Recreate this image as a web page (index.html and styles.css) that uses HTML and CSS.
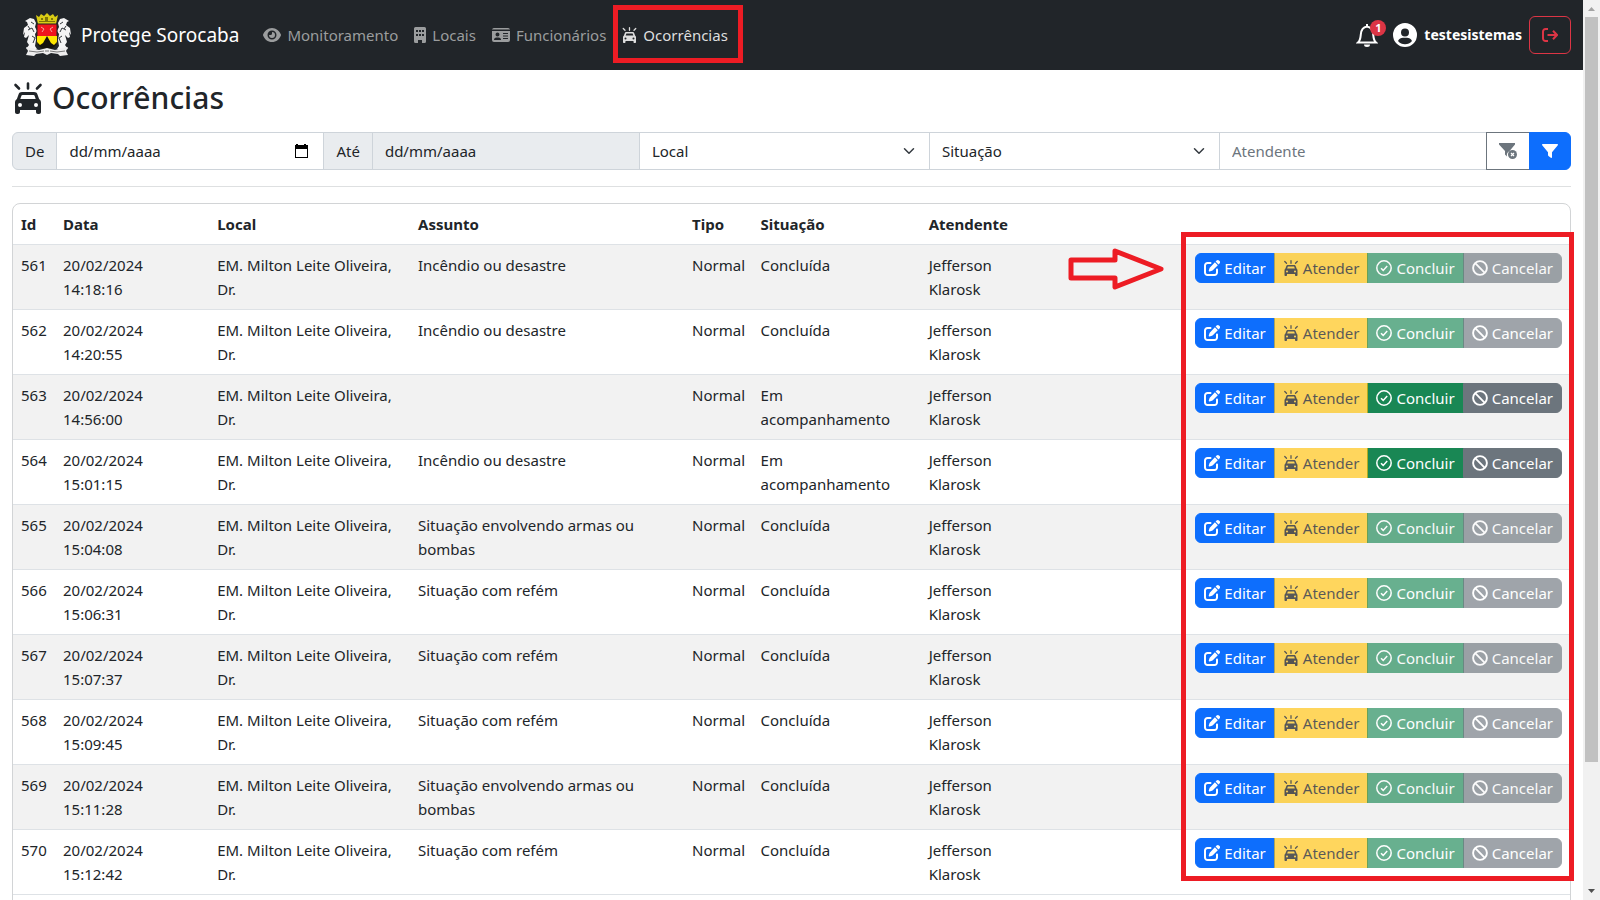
FILE: index.html
```
<!DOCTYPE html>
<html lang="pt-br">
<head>
    <meta charset="UTF-8">
    <meta name="viewport" content="width=device-width, initial-scale=1.0">
    <title>Protege Sorocaba - Ocorrências</title>
    <link rel="stylesheet" href="styles.css">
</head>
<body>
    <!-- ícones -->
    <svg class="sprite" aria-hidden="true">
        <symbol id="i-carro" viewBox="0 0 28 32">
            <path d="M14 1.500v5M1.500 3l3.500 3.500M26.500 3l-3.500 3.500" fill="none" stroke="currentColor" stroke-width="2.600" stroke-linecap="round"/>
            <path fill="currentColor" fill-rule="evenodd" d="M8 10h12c1.800 0 2.900.8 3.500 2.400l1.600 4.600c1.200.8 1.900 2 1.900 3.500V30c0 1.200-.8 2-2 2h-1c-1.200 0-2-.8-2-2v-2H6v2c0 1.200-.8 2-2 2H3c-1.200 0-2-.8-2-2v-9.500c0-1.500.7-2.700 1.900-3.500l1.600-4.600C5.100 10.800 6.200 10 8 10zm.5 3c-.6 0-.9.300-1.100.8L6.300 17h15.400l-1.100-3.200c-.2-.5-.5-.8-1.100-.8zM6 21a2 2 0 1 0 0 4 2 2 0 0 0 0-4zm16 0a2 2 0 1 0 0 4 2 2 0 0 0 0-4z"/>
        </symbol>
        <symbol id="i-editar" viewBox="0 0 16 16">
            <path fill="none" stroke="currentColor" stroke-width="2" stroke-linecap="round" d="M6.500 3H3.500A2.500 2.500 0 0 0 1 5.500v7A2.500 2.500 0 0 0 3.500 15h7a2.500 2.500 0 0 0 2.500-2.500v-3"/>
            <path fill="currentColor" d="M12.600.6a1.700 1.700 0 0 1 2.400 0l.5.5a1.700 1.700 0 0 1 0 2.400l-1 1-2.900-2.900zM10.900 2.300l2.900 2.900-5 5c-.2.200-.5.400-.8.500l-2.500.8c-.5.100-.9-.3-.8-.8l.8-2.500c.1-.3.300-.6.500-.8z"/>
        </symbol>
        <symbol id="i-check" viewBox="0 0 16 16">
            <circle cx="8" cy="8" r="7.200" fill="none" stroke="currentColor" stroke-width="1.500"/>
            <path d="M5 8.200l2.200 2.200L11.200 6" fill="none" stroke="currentColor" stroke-width="1.500"/>
        </symbol>
        <symbol id="i-proibido" viewBox="0 0 16 16">
            <circle cx="8" cy="8" r="6.900" fill="none" stroke="currentColor" stroke-width="1.900"/>
            <path d="M3.200 3.200l9.600 9.600" stroke="currentColor" stroke-width="1.900"/>
        </symbol>
    </svg>

    <div class="janela">
        <div class="pagina">
            <header class="navbar">
                <a class="marca" href="#">
                    <svg class="brasao" viewBox="0 0 48 44" aria-hidden="true">
                        <path fill="#d9cc14" d="M13 2l3 2 2-3 3 2 3-3 3 3 3-2 2 3 3-2-2 9H15z"/>
                        <path fill="#7d7508" d="M18 5h2v2h-2zM28 5h2v2h-2zM22 4h3v5h-3zM16 8h16v1H16z"/>
                        <g fill="#f4f4f4">
                            <path id="leao" d="M7 5l4 1 2 4-1 4 2 4-2 3 1 6-1 6 2 3-5 1-6-1 3-4-2-3 2-7-3 3-2-1 1-5-2 3 1-7 4-3-1-3-2-1z"/>
                            <use href="#leao" transform="matrix(-1 0 0 1 48 0)"/>
                        </g>
                        <path fill="none" stroke="#33373b" d="M8 9l3 2M5 17l4-2 2 4M9 23l3 2-2 5M5 13l2 3M40 9l-3 2M43 17l-4-2-2 4M39 23l-3 2 2 5M43 13l-2 3"/>
                        <path fill="#f0141e" stroke="#222" d="M14 11h20v13H14z"/>
                        <path fill="none" stroke="#f3a6a0" d="M18 14l3 2-2 3M30 14l-3 2 2 3"/>
                        <path fill="#ffe600" d="M14 23h20v5c0 5-5 7-10 9-5-2-10-4-10-9z"/>
                        <path fill="#16130d" d="M14 29l3 3 3-2 4-7 4 7 3 2 3-3c0 5-6 7-10 8-4-1-10-3-10-8z"/>
                        <path fill="#eee" d="M3 34l6 1 7 2 8-2 8 2 7-2 6-1-2 4 2 4-8 1-2-2-7-1-4 2-4-2-7 1-2 2-8-1 2-4z"/>
                        <path fill="none" stroke="#777" d="M6 38l8 1 7-1M42 38l-8 1-7-1M22 38h4"/>
                    </svg>
                    Protege Sorocaba
                </a>
                <nav class="menu">
                    <a href="#">
                        <svg class="icone-olho" viewBox="0 0 18 16" aria-hidden="true"><path fill="currentColor" fill-rule="evenodd" d="M9 1C4.700 1 1.500 4 .1 7.600a1 1 0 0 0 0 .8C1.500 12 4.700 15 9 15s7.500-3 8.900-6.600a1 1 0 0 0 0-.8C16.500 4 13.300 1 9 1zm0 2.500a4.500 4.500 0 1 1 0 9 4.500 4.500 0 0 1 0-9zM9 5v1.500A1.500 1.500 0 0 1 7.500 8H6a3 3 0 1 0 3-3z"/></svg>
                        Monitoramento
                    </a>
                    <a href="#">
                        <svg class="icone-predio" viewBox="0 0 12 16" aria-hidden="true"><path fill="currentColor" fill-rule="evenodd" d="M1.500 0h9A1.500 1.500 0 0 1 12 1.500v13a1.500 1.500 0 0 1-1.500 1.500H8v-3H4v3H1.500A1.500 1.500 0 0 1 0 14.500v-13A1.500 1.500 0 0 1 1.500 0zM2 3v2h2V3zm3 0v2h2V3zm3 0v2h2V3zM2 7v2h2V7zm3 0v2h2V7zm3 0v2h2V7z"/></svg>
                        Locais
                    </a>
                    <a href="#">
                        <svg class="icone-olho" viewBox="0 0 18 16" aria-hidden="true"><path fill="currentColor" fill-rule="evenodd" d="M2 1h14a2 2 0 0 1 2 1.500H0A2 2 0 0 1 2 1zM0 4h18v9a2 2 0 0 1-2 2H2a2 2 0 0 1-2-2zm5.500 1.500a2 2 0 1 0 0 4 2 2 0 0 0 0-4zM4.500 10.500A2.500 2.500 0 0 0 2 13h7a2.500 2.500 0 0 0-2.500-2.500zM11 6v1h5V6zm0 2.500v1h5v-1zm0 2.500v1h5v-1z"/></svg>
                        Funcionários
                    </a>
                    <a class="ativo" href="#" aria-current="page">
                        <svg class="icone-carro" aria-hidden="true"><use href="#i-carro"/></svg>
                        Ocorrências
                    </a>
                </nav>
                <div class="usuario">
                    <button class="sino" type="button" aria-label="Notificações">
                        <svg viewBox="0 0 22 24" aria-hidden="true"><path fill="none" stroke="currentColor" stroke-width="2" d="M2 19.500c2.300-2 2.500-4.500 2.800-8C5.200 6.500 7.500 4 11 3.500c3.500.5 5.800 3 6.200 8 .3 3.500.5 6 2.800 8zM11 1v2.500"/><path fill="currentColor" d="M8 21.500h6a3 2.500 0 0 1-6 0z"/></svg>
                        <span class="badge">1</span>
                    </button>
                    <svg class="avatar" viewBox="0 0 24 24" aria-hidden="true"><path fill="currentColor" fill-rule="evenodd" d="M12 0a12 12 0 1 0 0 24 12 12 0 0 0 0-24zm0 5.500a4 4 0 1 1 0 8 4 4 0 0 1 0-8zM5 18c1-2.300 3-3.300 5-3.300h4c2 0 4 1 5 3.300a9.300 9.300 0 0 1-14 0z"/></svg>
                    <strong>testesistemas</strong>
                    <button class="sair" type="button" aria-label="Sair">
                        <svg viewBox="0 0 16 16" aria-hidden="true"><path fill="none" stroke="currentColor" stroke-width="2" d="M6 2H3.500A2.500 2.500 0 0 0 1 4.500v7A2.500 2.500 0 0 0 3.500 14H6M5.500 8H15M11 3.700L15 8l-4 4.300"/></svg>
                    </button>
                </div>
            </header>

            <main>
                <h1><svg aria-hidden="true"><use href="#i-carro"/></svg>Ocorrências</h1>

                <form class="filtro">
                    <label for="de">De</label>
                    <input class="data" type="text" id="de" placeholder="dd/mm/aaaa">
                    <label for="ate">Até</label>
                    <input class="data" type="text" id="ate" placeholder="dd/mm/aaaa" disabled>
                    <select aria-label="Local"><option>Local</option></select>
                    <select aria-label="Situação"><option>Situação</option></select>
                    <input type="text" placeholder="Atendente" aria-label="Atendente">
                    <button class="limpar" type="button" aria-label="Limpar filtro">
                        <svg viewBox="0 0 18 16" aria-hidden="true"><path fill="currentColor" d="M0 0h16v1.500L10.500 8A5 5 0 0 0 8 13.500L6 11.500V8L0 1.500z"/><circle cx="13.500" cy="11.500" r="4.500" fill="currentColor"/><path d="M12 10l3 3M15 10l-3 3" stroke="#fff" stroke-width="1.200"/></svg>
                    </button>
                    <button class="filtrar" type="button" aria-label="Filtrar">
                        <svg viewBox="0 0 16 16" aria-hidden="true"><path fill="currentColor" d="M.7 1h14.600c.7 0 .9.800.5 1.300L10 9.200v5c0 .7-.7 1-1.200.6L6.500 13c-.3-.2-.5-.5-.5-.9V9.200L.2 2.300C-.2 1.800 0 1 .7 1z"/></svg>
                    </button>
                </form>

                <hr>

                <div class="card">
                    <table>
                        <colgroup>
                            <col class="c-id"><col class="c-data"><col class="c-local"><col class="c-assunto"><col class="c-tipo"><col class="c-situacao"><col class="c-atendente"><col>
                        </colgroup>
                        <thead>
                            <tr><th>Id</th><th>Data</th><th>Local</th><th>Assunto</th><th>Tipo</th><th>Situação</th><th>Atendente</th><th></th></tr>
                        </thead>
                        <tbody id="linhas"></tbody>
                    </table>
                    <div class="rodape"></div>
                </div>

                <!-- destaques do manual -->
                <svg class="seta" viewBox="0 0 96 42" aria-hidden="true"><path fill="none" stroke="#ed1c24" stroke-width="5" stroke-linejoin="round" d="M3 12h44V3l46 18-46 18v-9H3z"/></svg>
                <div class="destaque"></div>
            </main>
        </div>

        <div class="rolagem" aria-hidden="true">
            <svg viewBox="0 0 17 17"><path fill="#a3a3a3" d="M5 11l3.500-4 3.500 4z"/></svg>
            <div class="trilho"><div class="polegar"></div></div>
            <svg viewBox="0 0 17 17"><path fill="#505050" d="M5 6l3.500 4L12 6z"/></svg>
        </div>
    </div>

    <script src="script.js"></script>
</body>
</html>
```
FILE: styles.css
```
* {
    box-sizing: border-box;
}
body {
    margin: 0;
    background-color: #fff;
    color: #212529;
    font-family: "Segoe UI", "Noto Sans", sans-serif;
    font-size: 15px;
    line-height: 24px;
}
button, input, select {
    font: inherit;
    color: inherit;
    margin: 0;
}
button {
    cursor: pointer;
}
svg {
    flex: none;
}
.sprite {
    display: none;
}
.janela {
    display: flex;
    height: 100vh;
    overflow: hidden;
}
.pagina {
    flex: 1;
    min-width: 0;
}

/* navbar */
.navbar {
    display: flex;
    align-items: center;
    height: 70px;
    padding: 0 12px;
    background-color: #212529;
    color: #fff;
}
.navbar a {
    display: flex;
    align-items: center;
    text-decoration: none;
}
.marca {
    gap: 10px;
    margin-left: 11px;
    color: #fff;
    font-size: 19px;
}
.brasao {
    width: 48px;
    height: 44px;
}
.menu {
    display: flex;
    margin-left: 16px;
}
.menu a {
    gap: 6px;
    padding: 8px;
    color: #9b9d9e;
}
.menu .ativo {
    position: relative;
    color: #dedede;
}
.menu .ativo::after {
    content: "";
    position: absolute;
    top: -10px;
    right: -7px;
    bottom: -8px;
    left: -1px;
    border: 5px solid #ed1c24;
}
.icone-olho {
    width: 18px;
    height: 16px;
}
.icone-predio {
    width: 12px;
    height: 16px;
}
.icone-carro {
    width: 15px;
    height: 16px;
}
.usuario {
    display: flex;
    align-items: center;
    gap: 7px;
    margin-left: auto;
    font-size: 14px;
}
.sino {
    position: relative;
    display: flex;
    margin-right: 8px;
    padding: 0;
    border: 0;
    background: none;
    color: #fff;
}
.sino svg {
    width: 22px;
    height: 24px;
}
.badge {
    position: absolute;
    top: -3px;
    right: -8px;
    width: 16px;
    height: 16px;
    border-radius: 8px;
    background-color: #dc3545;
    font-size: 11px;
    font-weight: 700;
    line-height: 16px;
    text-align: center;
}
.avatar {
    width: 24px;
    height: 24px;
}
.sair {
    display: flex;
    align-items: center;
    justify-content: center;
    width: 42px;
    height: 38px;
    border: 1px solid #dc3545;
    border-radius: 6px;
    background: none;
    color: #dc3545;
}
.sair svg {
    width: 16px;
    height: 16px;
}

/* conteudo */
main {
    position: relative;
    padding: 8px 12px 0;
}
h1 {
    display: flex;
    align-items: center;
    gap: 8px;
    margin: 0 0 14px;
    font-size: 30px;
    font-weight: 500;
    line-height: 40px;
}
h1 svg {
    width: 32px;
    height: 32px;
}

/* filtro */
.filtro {
    display: flex;
    height: 38px;
}
.filtro > * {
    margin-left: -1px;
    border: 1px solid #ced4da;
    border-radius: 0;
}
.filtro label {
    padding: 6px 12px;
    background-color: #e9ecef;
}
.filtro > :first-child {
    margin-left: 0;
    border-radius: 6px 0 0 6px;
}
.filtro input {
    flex: 1 1 268px;
    min-width: 0;
    padding: 6px 12px;
    background-color: #fff;
}
.filtro input::placeholder {
    color: #6c757d;
    opacity: 1;
}
.filtro .data::placeholder {
    color: #212529;
}
.filtro .data {
    background-image: url("data:image/svg+xml,%3Csvg xmlns='http://www.w3.org/2000/svg' viewBox='0 0 14 14'%3E%3Cpath fill='%23000' fill-rule='evenodd' d='M2 0h2v1h6V0h2v1h2v13H1V1h1zM2 5v8h11V5z'/%3E%3C/svg%3E");
    background-repeat: no-repeat;
    background-position: right 15px center;
    background-size: 14px 14px;
}
.filtro .data:disabled {
    background-color: #e9ecef;
    background-image: none;
}
.filtro select {
    flex: 1 1 291px;
    min-width: 0;
    padding: 6px 12px;
    appearance: none;
    background: #fff url("data:image/svg+xml,%3Csvg xmlns='http://www.w3.org/2000/svg' viewBox='0 0 16 16'%3E%3Cpath fill='none' stroke='%23343a40' stroke-linecap='round' stroke-linejoin='round' stroke-width='2' d='m2 5 6 6 6-6'/%3E%3C/svg%3E") no-repeat right 12px center / 16px 12px;
}
.filtro button {
    display: flex;
    align-items: center;
    justify-content: center;
    width: 42px;
    padding: 0;
}
.filtro .limpar {
    width: 44px;
    background: #fff;
    border-color: #6c757d;
    color: #6c757d;
}
.filtro .filtrar {
    background: #0d6efd;
    border-color: #0d6efd;
    border-radius: 0 6px 6px 0;
    color: #fff;
}
.limpar svg {
    width: 18px;
    height: 16px;
}
.filtrar svg {
    width: 16px;
    height: 16px;
}
hr {
    margin: 16px 0;
    border: 0;
    border-top: 1px solid #dee0e1;
}

/* tabela */
.card {
    border: 1px solid #d2d4d6;
    border-radius: 8px;
    overflow: hidden;
}
table {
    width: 100%;
    table-layout: fixed;
    border-collapse: collapse;
}
.c-id { width: 2.7%; }
.c-data { width: 9.9%; }
.c-local { width: 12.9%; }
.c-assunto { width: 17.6%; }
.c-tipo { width: 4.4%; }
.c-situacao { width: 10.8%; }
.c-atendente { width: 7%; }
th, td {
    padding: 8px;
    border-bottom: 1px solid #dee2e6;
    text-align: left;
    vertical-align: top;
}
tbody tr:nth-child(odd) {
    background-color: #f2f2f2;
}
.rodape {
    height: 56px;
}
.acoes {
    display: flex;
    justify-content: flex-end;
}
.btn {
    display: flex;
    align-items: center;
    gap: 4px;
    height: 30px;
    margin-left: -1px;
    padding: 0 8px;
    border: 1px solid;
    white-space: nowrap;
}
.btn svg {
    width: 16px;
    height: 16px;
}
.btn:first-child {
    border-radius: 6px 0 0 6px;
}
.btn:last-child {
    border-radius: 0 6px 6px 0;
}
.btn:disabled {
    opacity: .65;
    cursor: default;
}
.editar {
    background-color: #0d6efd;
    border-color: #0d6efd;
    color: #fff;
}
.atender {
    background-color: #ffc107;
    border-color: #ffc107;
    color: #000;
}
.concluir {
    background-color: #198754;
    border-color: #198754;
    color: #fff;
}
.cancelar {
    background-color: #6c757d;
    border-color: #6c757d;
    color: #fff;
}

/* destaques */
.destaque {
    position: absolute;
    top: 162px;
    right: 9px;
    width: 393px;
    height: 649px;
    border: 5px solid #ed1c24;
    pointer-events: none;
}
.seta {
    position: absolute;
    top: 178px;
    right: 419px;
    width: 96px;
    height: 42px;
}

/* barra de rolagem */
.rolagem {
    display: flex;
    flex-direction: column;
    width: 17px;
    background-color: #f1f1f1;
}
.rolagem svg {
    width: 17px;
    height: 17px;
}
.trilho {
    flex: 1;
    padding: 0 2px;
}
.polegar {
    height: 86%;
    background-color: #c1c1c1;
}
```
FILE: script.js
```
var local = 'EM. Milton Leite Oliveira, Dr.';
var atendente = 'Jefferson Klarosk';

var ocorrencias = [
    [561, '20/02/2024 14:18:16', 'Incêndio ou desastre', 'Concluída'],
    [562, '20/02/2024 14:20:55', 'Incêndio ou desastre', 'Concluída'],
    [563, '20/02/2024 14:56:00', '', 'Em acompanhamento'],
    [564, '20/02/2024 15:01:15', 'Incêndio ou desastre', 'Em acompanhamento'],
    [565, '20/02/2024 15:04:08', 'Situação envolvendo armas ou bombas', 'Concluída'],
    [566, '20/02/2024 15:06:31', 'Situação com refém', 'Concluída'],
    [567, '20/02/2024 15:07:37', 'Situação com refém', 'Concluída'],
    [568, '20/02/2024 15:09:45', 'Situação com refém', 'Concluída'],
    [569, '20/02/2024 15:11:28', 'Situação envolvendo armas ou bombas', 'Concluída'],
    [570, '20/02/2024 15:12:42', 'Situação com refém', 'Concluída']
];

function botao(classe, icone, texto, desabilitado) {
    return '<button type="button" class="btn ' + classe + '"' + (desabilitado ? ' disabled' : '') + '>' +
        '<svg aria-hidden="true"><use href="#' + icone + '"/></svg>' + texto + '</button>';
}

document.getElementById('linhas').innerHTML = ocorrencias.map(function (o) {
    var concluida = o[3] === 'Concluída';
    return '<tr><td>' + o[0] + '</td><td>' + o[1] + '</td><td>' + local + '</td><td>' + o[2] + '</td>' +
        '<td>Normal</td><td>' + o[3] + '</td><td>' + atendente + '</td><td><div class="acoes">' +
        botao('editar', 'i-editar', 'Editar', false) +
        botao('atender', 'i-carro', 'Atender', true) +
        botao('concluir', 'i-check', 'Concluir', concluida) +
        botao('cancelar', 'i-proibido', 'Cancelar', concluida) +
        '</div></td></tr>';
}).join('');
```
